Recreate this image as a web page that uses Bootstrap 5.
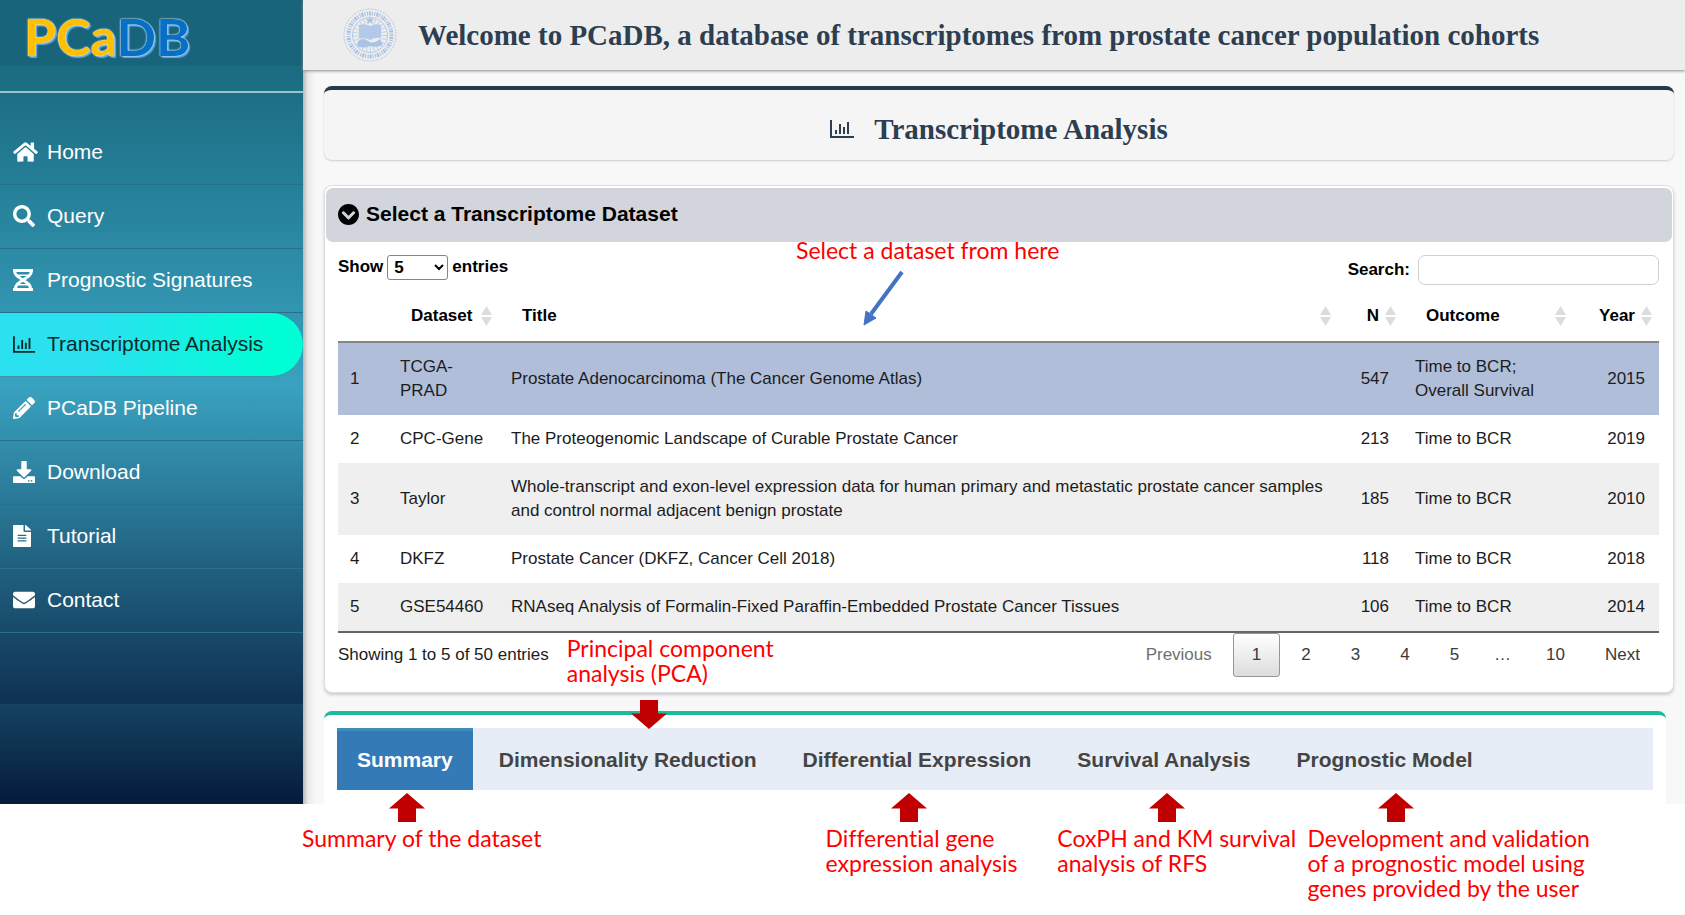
<!DOCTYPE html>
<html lang="en">
<head>
<meta charset="utf-8">
<meta name="viewport" content="width=device-width, initial-scale=1">
<title>PCaDB - Transcriptome Analysis</title>
<link href="https://cdn.jsdelivr.net/npm/bootstrap@5.3.0/dist/css/bootstrap.min.css" rel="stylesheet">
<style>
  body { background: #fff; color: #1c1c1c; font: 17px/24px "Liberation Sans", Arial, sans-serif; }
  .page { padding-bottom: 111px; }

  /* sidebar */
  .side { width: 303px; background: linear-gradient(#19667b 0, #1c6e84 11%, #39a2c0 48%, #205f7e 71%, #0f3152 87.500%, #154360 87.500%, #051b3c 100%); }
  .brand { height: 93px; padding: 4px 0 0 24px; border-bottom: 2px solid #9fc3cd; background: linear-gradient(#18647a 66px, transparent 66px); }
  .brand a { font: 700 52px/64px Lato, "Open Sans", sans-serif; color: #0670c6; text-decoration: none; text-shadow: 0 0 1px #fff, 0 0 2px #fff, 2px 2px 1px #5aa2e0; }
  .brand b { color: #ffc003; font-weight: 700; }
  .side-nav { padding-top: 28px; }
  .side-nav a { height: 64px; padding: 0 14px 1px 13px; font-size: 21px; color: #fff; text-decoration: none; border-bottom: 1px solid #25708c; }
  .side-nav a.active { color: #0b2b2b; background: linear-gradient(90deg, #2be0ef 30%, #00ffd5 90%); border-radius: 0 32px 32px 0; border-bottom-color: #3f94a5; }
  .side-nav .ico { width: 34px; }
  .ico svg, .ttl svg { fill: currentColor; display: block; }

  /* content */
  .content { background: linear-gradient(90deg, #b9b9b9, #e9e9e9 5px, #f8f8f8 12px); }
  .top { height: 70px; padding: 0 37px; gap: 14px; background: #ededed; box-shadow: 0 1px 3px #888; }
  .serif { font: 700 29px/32px "Liberation Serif", Georgia, serif; color: #2c3e50; margin: 0; }
  .inner { padding: 16px 11px 0 21px; }
  .ttl { height: 74px; gap: 20px; padding-top: 8px; background: #f5f5f5; border-top: 4px solid #243b4d; border-radius: 8px; box-shadow: 0 1px 2px #ccc; color: #2c3e50; }
  .panel { margin-top: 25px; padding: 2px 1px 15px; background: #fff; border: 1px solid #dcdfe4; border-radius: 8px; box-shadow: 0 2px 3px #ccc; }
  .panel-top { height: 54px; padding: 0 12px 2px; gap: 7px; background: #d2d5dc; border-radius: 7px; color: #000; }
  .panel-top h2 { font-size: 21px; line-height: 24px; font-weight: 700; margin: 0; }
  .panel-main { padding: 13px 13px 0 12px; }
  .controls { color: #000; font-weight: 700; height: 30px; }
  .controls select { width: 61px; height: 25px; padding: 0 2px; border: 1px solid #858585; border-radius: 3px; background: #fff; color: #000; font-weight: 700; }
  .controls input { width: 241px; height: 30px; border: 1px solid #d0d0d0; border-radius: 7px; }

  .data { table-layout: fixed; width: 100%; border-bottom: 2px solid #666; }
  .data th { position: relative; height: 57px; padding: 13px 24px 8px 23px; color: #000; border-bottom: 2px solid #858585; white-space: nowrap; }
  .data td { padding: 12px; line-height: 24px; }
  .data td.text-end { padding-right: 14px; }
  .data tbody tr:nth-child(odd) { background: #efefef; }
  .data tbody tr.chosen { background: #b0bed9; }
  .c-idx { width: 50px; } .c-set { width: 111px; } .c-n { width: 65px; } .c-out { width: 170px; } .c-year { width: 86px; }
  .sorter { position: absolute; right: 7px; top: 21px; }

  .pager { gap: 2px; margin: 0; }
  .pager button, .pager span { height: 44px; line-height: 24px; padding: 9px 18px; border: 1px solid transparent; border-radius: 3px; background: none; color: #3a3a3a; }
  .pager span { padding: 9px 13px; }
  .pager button:disabled { color: #6f6f6f; }
  .pager .active button { border-color: #979797; background: linear-gradient(#fff, #dcdcdc); }

  /* analysis tabs */
  .tabs-box { margin: 18px 8px 0 0; padding: 13px 13px 14px; background: #fff; border-top: 4px solid #1abc9c; border-radius: 8px 8px 0 0; }
  .tabs-bar { gap: 6px; background: #e6edf6; }
  .tabs-bar li { position: relative; }
  .tabs-bar .tab { height: 62px; padding: 0 20px 2px; border: 0; border-top: 3px solid transparent; background: none; color: #444; font-size: 21px; font-weight: 700; }
  .tabs-bar .tab.active { background: #337ab7; border-top-color: #3c8dbc; color: #fff; }

  /* explanatory notes laid over the page */
  .note { position: absolute; z-index: 3; color: #f00; font: 400 23px/25px Lato, sans-serif; font-variant-ligatures: none; white-space: nowrap; }
  .mark-arrow { position: absolute; z-index: 3; fill: #c00000; }
  .below { top: 98px; }
  .tabs-bar .mark-arrow { top: 65px; }
  .tabs-bar .mark-arrow.down { top: -28px; }
</style>
</head>
<body>
<svg width="0" height="0" class="position-absolute" aria-hidden="true">
  <defs>
    <symbol id="chart" viewBox="0 0 24 18"><path d="M0 0h2v16h22v2H0zM5 10h2v4H5zM9 4h2v10H9zM13 7h2v7h-2zM17 2h2v12h-2z"/></symbol>
    <symbol id="sort" viewBox="0 0 11 20"><path d="M5.500 0L11 9H0zM0 11h11l-5.500 9z" fill="#dcdcdc"/></symbol>
    <symbol id="up" viewBox="0 0 36 29"><path d="M18 0l18 15.500h-9V29H9V15.500H0z"/></symbol>
    <symbol id="down" viewBox="0 0 36 29"><path d="M18 29l18-15.500h-9V0H9v13.500H0z"/></symbol>
  </defs>
</svg>
<div class="page">
  <div class="d-flex">
    <aside class="side flex-shrink-0">
      <div class="brand"><a href="#"><b>PCa</b>DB</a></div>
      <nav class="side-nav d-flex flex-column" aria-label="Main">
        <a class="d-flex align-items-center" href="#"><span class="ico"><svg width="25" height="22" viewBox="0 0 576 512"><path d="M280.370 148.260L96 300.110V464a16 16 0 0 0 16 16l112.060-.29a16 16 0 0 0 15.920-16V368a16 16 0 0 1 16-16h64a16 16 0 0 1 16 16v95.640a16 16 0 0 0 16 16.050L464 480a16 16 0 0 0 16-16V300L295.670 148.260a12.190 12.190 0 0 0-15.300 0zM571.600 251.470L488 182.560V44.050a12 12 0 0 0-12-12h-56a12 12 0 0 0-12 12v72.610L318.470 43a48 48 0 0 0-61 0L4.340 251.470a12 12 0 0 0-1.600 16.900l25.500 31A12 12 0 0 0 45.150 301l235.220-193.740a12.190 12.190 0 0 1 15.300 0L530.900 301a12 12 0 0 0 16.900-1.600l25.500-31a12 12 0 0 0-1.700-16.930z"/></svg></span>Home</a>
        <a class="d-flex align-items-center" href="#"><span class="ico"><svg width="22" height="22" viewBox="0 0 512 512"><path d="M505 442.700L405.300 343c-4.500-4.500-10.600-7-17-7H372c27.600-35.300 44-79.700 44-128C416 93.100 322.900 0 208 0S0 93.100 0 208s93.100 208 208 208c48.300 0 92.700-16.400 128-44v16.300c0 6.400 2.500 12.500 7 17l99.700 99.700c9.400 9.400 24.600 9.400 33.900 0l28.300-28.300c9.400-9.400 9.400-24.600.1-34zM208 336c-70.700 0-128-57.200-128-128 0-70.700 57.200-128 128-128 70.700 0 128 57.200 128 128 0 70.700-57.200 128-128 128z"/></svg></span>Query</a>
        <a class="d-flex align-items-center" href="#"><span class="ico"><svg width="20" height="22" viewBox="0 0 20 22"><path d="M1.500 0v1.500c0 4 3 6 8.500 9.500s7.500 5 7.500 9V22M18.500 0v1.500c0 4-3 6-8.500 9.500s-7.500 5-7.500 9V22" fill="none" stroke="currentColor" stroke-width="3"/><path d="M0 0h20v3H0zM5 5.500h10v1.600H5zM5 15h10v1.600H5zM0 19h20v3H0z"/></svg></span>Prognostic Signatures</a>
        <a class="d-flex align-items-center active" href="#" aria-current="page"><span class="ico"><svg width="22" height="17"><use href="#chart"/></svg></span>Transcriptome Analysis</a>
        <a class="d-flex align-items-center" href="#"><span class="ico"><svg width="22" height="22" viewBox="0 0 512 512"><path d="M497.900 142.100l-46.100 46.100c-4.700 4.700-12.300 4.700-17 0l-111-111c-4.700-4.700-4.700-12.300 0-17l46.100-46.100c18.700-18.700 49.100-18.700 67.900 0l60.100 60.100c18.800 18.700 18.800 49.100 0 67.900zM284.200 99.800L21.600 362.400.4 483.900c-2.900 16.400 11.400 30.600 27.800 27.800l121.500-21.300 262.600-262.600c4.700-4.700 4.700-12.300 0-17l-111-111c-4.800-4.700-12.400-4.700-17.100 0zM124.100 339.900c-5.500-5.500-5.500-14.300 0-19.800l154-154c5.500-5.500 14.300-5.500 19.800 0s5.500 14.300 0 19.800l-154 154c-5.500 5.500-14.300 5.500-19.800 0zM88 424h48v36.300l-64.500 11.300-31.100-31.100L51.700 376H88v48z"/></svg></span>PCaDB Pipeline</a>
        <a class="d-flex align-items-center" href="#"><span class="ico"><svg width="22" height="22" viewBox="0 0 512 512"><path d="M216 0h80c13.300 0 24 10.700 24 24v168h87.700c17.800 0 26.700 21.500 14.100 34.100L269.700 378.300c-7.500 7.500-19.800 7.500-27.300 0L90.100 226.100c-12.600-12.600-3.700-34.100 14.100-34.100H192V24c0-13.300 10.700-24 24-24zm296 376v112c0 13.300-10.700 24-24 24H24c-13.300 0-24-10.700-24-24V376c0-13.300 10.700-24 24-24h146.700l49 49c20.100 20.100 52.500 20.100 72.600 0l49-49H488c13.300 0 24 10.700 24 24zm-124 88c0-11-9-20-20-20s-20 9-20 20 9 20 20 20 20-9 20-20zm64 0c0-11-9-20-20-20s-20 9-20 20 9 20 20 20 20-9 20-20z"/></svg></span>Download</a>
        <a class="d-flex align-items-center" href="#"><span class="ico"><svg width="18" height="22" viewBox="0 0 384 512" preserveAspectRatio="none"><path d="M224 136V0H24C10.700 0 0 10.700 0 24v464c0 13.300 10.700 24 24 24h336c13.300 0 24-10.700 24-24V160H248c-13.200 0-24-10.800-24-24zm64 236c0 6.600-5.400 12-12 12H108c-6.600 0-12-5.400-12-12v-8c0-6.600 5.400-12 12-12h168c6.600 0 12 5.400 12 12v8zm0-64c0 6.600-5.400 12-12 12H108c-6.600 0-12-5.400-12-12v-8c0-6.600 5.400-12 12-12h168c6.600 0 12 5.400 12 12v8zm0-72v8c0 6.600-5.400 12-12 12H108c-6.600 0-12-5.400-12-12v-8c0-6.600 5.400-12 12-12h168c6.600 0 12 5.400 12 12zm96-114.100v6.100H256V0h6.100c6.400 0 12.500 2.500 17 7l97.900 98c4.500 4.500 7 10.600 7 16.900z"/></svg></span>Tutorial</a>
        <a class="d-flex align-items-center" href="#"><span class="ico"><svg width="22" height="22" viewBox="0 0 512 512"><path d="M502.300 190.800c3.900-3.100 9.700-.2 9.700 4.700V400c0 26.500-21.500 48-48 48H48c-26.500 0-48-21.500-48-48V195.600c0-5 5.700-7.800 9.700-4.700 22.400 17.400 52.100 39.500 154.100 113.600 21.100 15.400 56.700 47.800 92.200 47.600 35.700.3 72-32.800 92.300-47.600 102-74.100 131.600-96.300 154-113.700zM256 320c23.200.4 56.600-29.200 73.400-41.400 132.700-96.300 142.800-104.700 173.400-128.700 5.800-4.500 9.200-11.500 9.200-18.900v-19c0-26.500-21.500-48-48-48H48c-26.500 0-48 21.500-48 48v19c0 7.400 3.400 14.300 9.200 18.900 30.600 23.900 40.700 32.400 173.400 128.700 16.800 12.200 50.200 41.800 73.400 41.400z"/></svg></span>Contact</a>
      </nav>
    </aside>

    <main class="content flex-grow-1">
      <header class="top d-flex align-items-center">
        <svg class="me-1" width="60" height="54" viewBox="0 0 54 54" role="img" aria-label="University seal">
          <g fill="none" stroke="#b5cbe9">
            <circle cx="27" cy="27" r="26" stroke-width="1" stroke-dasharray="2 1"/>
            <circle cx="27" cy="27" r="17.500" stroke-width="1"/>
            <circle cx="27" cy="27" r="14" stroke-width="6" stroke-dasharray="1 2.500" opacity=".7"/>
            <circle cx="27" cy="27" r="21.500" stroke="#a6c0e6" stroke-width="4" stroke-dasharray="1 1 2 1 1 1.500"/>
          </g>
          <path d="M16 17q6-2 11 1 5-3 11-1v13q-6-1-11 2-5-3-11-1z" fill="#b3c9ea"/>
          <path d="M15 33q5-4 10 0t12-2l3 6q-7 3-13 1-7 3-13 0z" fill="#a9c2e6"/>
          <path d="M27 8l1 3h3l-2 2 1 3-3-2-3 2 1-3-2-2h3z" fill="#a9c2e6"/>
        </svg>
        <h1 class="serif">Welcome to PCaDB, a database of transcriptomes from prostate cancer population cohorts</h1>
      </header>

      <div class="inner">
        <div class="ttl d-flex align-items-center justify-content-center">
          <svg width="24" height="18"><use href="#chart"/></svg>
          <h2 class="serif">Transcriptome Analysis</h2>
        </div>

        <section class="panel position-relative">
          <div class="panel-top d-flex align-items-center">
            <svg width="21" height="21" viewBox="8 8 496 496" aria-hidden="true"><path d="M504 256c0 137-111 248-248 248S8 393 8 256 119 8 256 8s248 111 248 248zM273 369.900l135.500-135.500c9.400-9.400 9.400-24.600 0-33.900l-17-17c-9.400-9.400-24.600-9.400-33.900 0L256 285.100 154.400 183.500c-9.400-9.400-24.600-9.400-33.900 0l-17 17c-9.400 9.400-9.400 24.600 0 33.900L239 369.900c9.400 9.400 24.600 9.400 34 0z"/></svg>
            <h2>Select a Transcriptome Dataset</h2>
          </div>
          <div class="panel-main">
            <div class="controls d-flex justify-content-between">
              <label class="d-flex align-items-start gap-1">Show <select><option>5</option><option>10</option><option>25</option></select> entries</label>
              <label class="d-flex align-items-center gap-2">Search: <input type="search"></label>
            </div>
            <table class="data">
              <thead>
                <tr>
                  <th class="c-idx"></th>
                  <th class="c-set">Dataset<svg class="sorter" width="11" height="20"><use href="#sort"/></svg></th>
                  <th>Title<svg class="sorter" width="11" height="20"><use href="#sort"/></svg></th>
                  <th class="c-n text-end">N<svg class="sorter" width="11" height="20"><use href="#sort"/></svg></th>
                  <th class="c-out">Outcome<svg class="sorter" width="11" height="20"><use href="#sort"/></svg></th>
                  <th class="c-year text-end">Year<svg class="sorter" width="11" height="20"><use href="#sort"/></svg></th>
                </tr>
              </thead>
              <tbody>
                <tr class="chosen"><td>1</td><td>TCGA-PRAD</td><td>Prostate Adenocarcinoma (The Cancer Genome Atlas)</td><td class="text-end">547</td><td>Time to BCR; Overall Survival</td><td class="text-end">2015</td></tr>
                <tr><td>2</td><td>CPC-Gene</td><td>The Proteogenomic Landscape of Curable Prostate Cancer</td><td class="text-end">213</td><td>Time to BCR</td><td class="text-end">2019</td></tr>
                <tr><td>3</td><td>Taylor</td><td>Whole-transcript and exon-level expression data for human primary and metastatic prostate cancer samples and control normal adjacent benign prostate</td><td class="text-end">185</td><td>Time to BCR</td><td class="text-end">2010</td></tr>
                <tr><td>4</td><td>DKFZ</td><td>Prostate Cancer (DKFZ, Cancer Cell 2018)</td><td class="text-end">118</td><td>Time to BCR</td><td class="text-end">2018</td></tr>
                <tr><td>5</td><td>GSE54460</td><td>RNAseq Analysis of Formalin-Fixed Paraffin-Embedded Prostate Cancer Tissues</td><td class="text-end">106</td><td>Time to BCR</td><td class="text-end">2014</td></tr>
              </tbody>
            </table>
            <div class="d-flex justify-content-between align-items-center">
              <div>Showing 1 to 5 of 50 entries</div>
              <ul class="pager d-flex list-unstyled">
                <li><button type="button" disabled>Previous</button></li>
                <li class="active"><button type="button" aria-current="page">1</button></li>
                <li><button type="button">2</button></li>
                <li><button type="button">3</button></li>
                <li><button type="button">4</button></li>
                <li><button type="button">5</button></li>
                <li><span class="d-block">…</span></li>
                <li><button type="button">10</button></li>
                <li><button type="button">Next</button></li>
              </ul>
            </div>
          </div>
          <div class="note" style="left:471px;top:52px">Select a dataset from here</div>
          <svg class="mark-arrow" style="left:538px;top:84px" width="42" height="56" viewBox="0 0 42 56"><path d="M39 2L8 44" stroke="#4472c4" stroke-width="4" fill="none"/><path d="M1 55L3 41l10 7z" fill="#4472c4" stroke="#4472c4"/></svg>
        </section>

        <section class="tabs-box">
          <ul class="tabs-bar nav">
            <li>
              <button class="tab active" type="button">Summary</button>
              <svg class="mark-arrow" style="left:52px" width="36" height="29"><use href="#up"/></svg>
              <div class="note below" style="left:-35px">Summary of the dataset</div>
            </li>
            <li>
              <button class="tab" type="button">Dimensionality Reduction</button>
              <svg class="mark-arrow down" style="left:152px" width="36" height="29"><use href="#down"/></svg>
              <div class="note" style="left:88px;top:-92px">Principal component<br>analysis (PCA)</div>
            </li>
            <li>
              <button class="tab" type="button">Differential Expression</button>
              <svg class="mark-arrow" style="left:108px" width="36" height="29"><use href="#up"/></svg>
              <div class="note below" style="left:43px">Differential gene<br>expression analysis</div>
            </li>
            <li>
              <button class="tab" type="button">Survival Analysis</button>
              <svg class="mark-arrow" style="left:92px" width="36" height="29"><use href="#up"/></svg>
              <div class="note below" style="left:0">CoxPH and KM survival<br>analysis of RFS</div>
            </li>
            <li>
              <button class="tab" type="button">Prognostic Model</button>
              <svg class="mark-arrow" style="left:102px" width="36" height="29"><use href="#up"/></svg>
              <div class="note below" style="left:31px">Development and validation<br>of a prognostic model using<br>genes provided by the user</div>
            </li>
          </ul>
        </section>
      </div>
    </main>
  </div>
</div>
<script src="https://cdn.jsdelivr.net/npm/bootstrap@5.3.0/dist/js/bootstrap.bundle.min.js"></script>
</body>
</html>
